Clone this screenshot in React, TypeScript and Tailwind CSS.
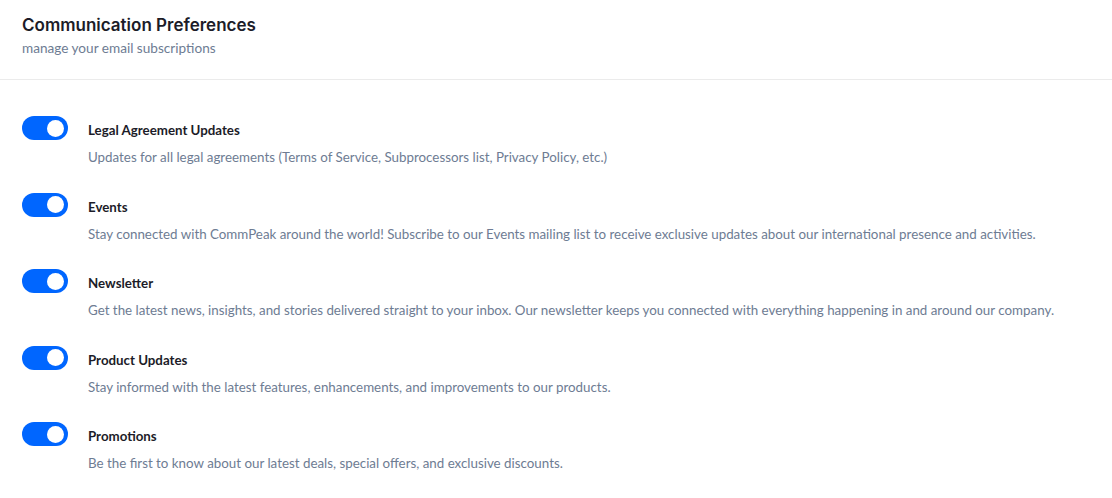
import { useState } from "react";

const prefs = [
  {
    title: "Legal Agreement Updates",
    desc: "Updates for all legal agreements (Terms of Service, Subprocessors list, Privacy Policy, etc.)",
  },
  {
    title: "Events",
    desc: "Stay connected with CommPeak around the world! Subscribe to our Events mailing list to receive exclusive updates about our international presence and activities.",
  },
  {
    title: "Newsletter",
    desc: "Get the latest news, insights, and stories delivered straight to your inbox. Our newsletter keeps you connected with everything happening in and around our company.",
  },
  {
    title: "Product Updates",
    desc: "Stay informed with the latest features, enhancements, and improvements to our products.",
  },
  {
    title: "Promotions",
    desc: "Be the first to know about our latest deals, special offers, and exclusive discounts.",
  },
];

function Toggle({ on, onClick }: { on: boolean; onClick: () => void }) {
  return (
    <button
      onClick={onClick}
      className={`relative h-6 w-[46px] shrink-0 rounded-full ${on ? "bg-[#0066ff]" : "bg-[#d0d5dd]"}`}
    >
      <span
        className={`absolute top-[3.5px] h-[17px] w-[17px] rounded-full bg-white ${on ? "left-[25px]" : "left-[4px]"}`}
      />
    </button>
  );
}

export default function App() {
  const [state, setState] = useState(prefs.map(() => true));

  return (
    <div className="min-h-screen bg-white font-['Lato',sans-serif]">
      <div className="border-b border-[#ebebeb] px-[22px] pt-[13px] pb-[21px]">
        <h1 className="font-['Inter',sans-serif] text-[17px] font-semibold leading-[24px] text-[#1c1c28]">
          Communication Preferences
        </h1>
        <p className="mt-[1px] text-[13.6px] leading-[20px] text-[#6e7c93]">manage your email subscriptions</p>
      </div>
      <div className="flex flex-col gap-[25.5px] px-[22px] pt-[36px]">
        {prefs.map((p, i) => (
          <div key={p.title} className="flex items-start gap-5">
            <Toggle
              on={state[i]}
              onClick={() => setState((s) => s.map((v, j) => (j === i ? !v : v)))}
            />
            <div className="pt-[5px]">
              <div className="text-[13.3px] font-bold leading-[18px] text-[#1c1c28]">{p.title}</div>
              <div className="mt-[8px] text-[13.35px] leading-[20px] text-[#6e7c93]">{p.desc}</div>
            </div>
          </div>
        ))}
      </div>
    </div>
  );
}
